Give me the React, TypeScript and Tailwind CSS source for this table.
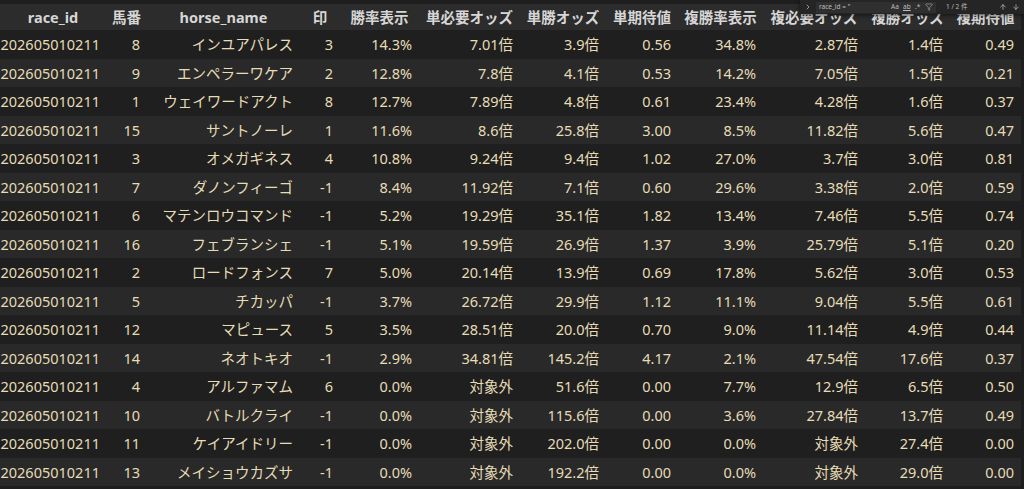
import { ArrowUp, ArrowDown, ChevronRight, Filter } from "lucide-react";

const widths = [106, 41, 153, 40, 79, 101, 86, 72, 85, 102, 85, 71];

const headers = [
  "race_id",
  "馬番",
  "horse_name",
  "印",
  "勝率表示",
  "単必要オッズ",
  "単勝オッズ",
  "単期待値",
  "複勝率表示",
  "複必要オッズ",
  "複勝オッズ",
  "複期待値",
];

const rows: string[][] = [
  ["8", "インユアパレス", "3", "14.3%", "7.01倍", "3.9倍", "0.56", "34.8%", "2.87倍", "1.4倍", "0.49"],
  ["9", "エンペラーワケア", "2", "12.8%", "7.8倍", "4.1倍", "0.53", "14.2%", "7.05倍", "1.5倍", "0.21"],
  ["1", "ウェイワードアクト", "8", "12.7%", "7.89倍", "4.8倍", "0.61", "23.4%", "4.28倍", "1.6倍", "0.37"],
  ["15", "サントノーレ", "1", "11.6%", "8.6倍", "25.8倍", "3.00", "8.5%", "11.82倍", "5.6倍", "0.47"],
  ["3", "オメガギネス", "4", "10.8%", "9.24倍", "9.4倍", "1.02", "27.0%", "3.7倍", "3.0倍", "0.81"],
  ["7", "ダノンフィーゴ", "-1", "8.4%", "11.92倍", "7.1倍", "0.60", "29.6%", "3.38倍", "2.0倍", "0.59"],
  ["6", "マテンロウコマンド", "-1", "5.2%", "19.29倍", "35.1倍", "1.82", "13.4%", "7.46倍", "5.5倍", "0.74"],
  ["16", "フェブランシェ", "-1", "5.1%", "19.59倍", "26.9倍", "1.37", "3.9%", "25.79倍", "5.1倍", "0.20"],
  ["2", "ロードフォンス", "7", "5.0%", "20.14倍", "13.9倍", "0.69", "17.8%", "5.62倍", "3.0倍", "0.53"],
  ["5", "チカッパ", "-1", "3.7%", "26.72倍", "29.9倍", "1.12", "11.1%", "9.04倍", "5.5倍", "0.61"],
  ["12", "マピュース", "5", "3.5%", "28.51倍", "20.0倍", "0.70", "9.0%", "11.14倍", "4.9倍", "0.44"],
  ["14", "ネオトキオ", "-1", "2.9%", "34.81倍", "145.2倍", "4.17", "2.1%", "47.54倍", "17.6倍", "0.37"],
  ["4", "アルファマム", "6", "0.0%", "対象外", "51.6倍", "0.00", "7.7%", "12.9倍", "6.5倍", "0.50"],
  ["10", "バトルクライ", "-1", "0.0%", "対象外", "115.6倍", "0.00", "3.6%", "27.84倍", "13.7倍", "0.49"],
  ["11", "ケイアイドリー", "-1", "0.0%", "対象外", "202.0倍", "0.00", "0.0%", "対象外", "27.4倍", "0.00"],
  ["13", "メイショウカズサ", "-1", "0.0%", "対象外", "192.2倍", "0.00", "0.0%", "対象外", "29.0倍", "0.00"],
];

// VS Code style find widget in the top-right corner, drawn over the header
const FindWidget = () => {
  return (
    <div className="absolute top-0 left-[800px] w-[224px] h-[14px] bg-[#252526] shadow-[0_1px_4px_rgba(0,0,0,0.6)] flex items-center text-[6.5px] text-[#bdbdbd] leading-none">
      <ChevronRight className="w-[8px] h-[8px] ml-[4px] text-[#cccccc] shrink-0" strokeWidth={2} />
      <div className="ml-[4px] w-[120px] h-[11px] bg-[#2f2f2f] flex items-center pl-[3px] pr-[3px]">
        <span className="w-[60px] whitespace-nowrap">race_id = "</span>
        <div className="ml-auto flex items-center">
          <span className="w-[12px]">Aa</span>
          <span className="w-[12px] underline">ab</span>
          <span className="w-[10px]">.*</span>
          <Filter className="w-[8px] h-[8px]" strokeWidth={1.6} />
        </div>
      </div>
      <span className="ml-[10px] whitespace-nowrap">1 / 2 件</span>
      <div className="ml-auto mr-[4px] flex items-center gap-[5px] text-[#cccccc]">
        <ArrowUp className="w-[8px] h-[8px]" strokeWidth={2} />
        <ArrowDown className="w-[8px] h-[8px]" strokeWidth={2} />
      </div>
    </div>
  );
};

const App = () => {
  return (
    <div
      className="relative w-[1024px] h-[489px] overflow-hidden bg-[#1e1e1e] pt-[4px]"
      style={{ fontFamily: '"Noto Sans", "Noto Sans CJK JP", sans-serif' }}
    >
      <table className="table-fixed border-collapse w-[1021px] text-[14.5px]">
        <colgroup>
          {widths.map((w, i) => (
            <col key={i} style={{ width: w }} />
          ))}
        </colgroup>
        <thead>
          <tr className="h-[26px] bg-[#2c2c2c]">
            {headers.map((h) => (
              <th key={h} className="p-0 text-center font-bold text-[#d6d6d6] whitespace-nowrap leading-none">
                {h}
              </th>
            ))}
          </tr>
        </thead>
        <tbody>
          {rows.map((r, i) => (
            <tr key={i} className={i % 2 === 0 ? "h-[28.5px] bg-[#1f1f1f]" : "h-[28.5px] bg-[#292929]"}>
              <td className="p-0 pr-[6px] text-right text-[#e6dcb6] whitespace-nowrap leading-none">202605010211</td>
              {r.map((c, j) => (
                <td key={j} className="p-0 pr-[7px] text-right text-[#e6dcb6] whitespace-nowrap leading-none">
                  {c}
                </td>
              ))}
            </tr>
          ))}
        </tbody>
      </table>
      <FindWidget />
    </div>
  );
};

export default App;
